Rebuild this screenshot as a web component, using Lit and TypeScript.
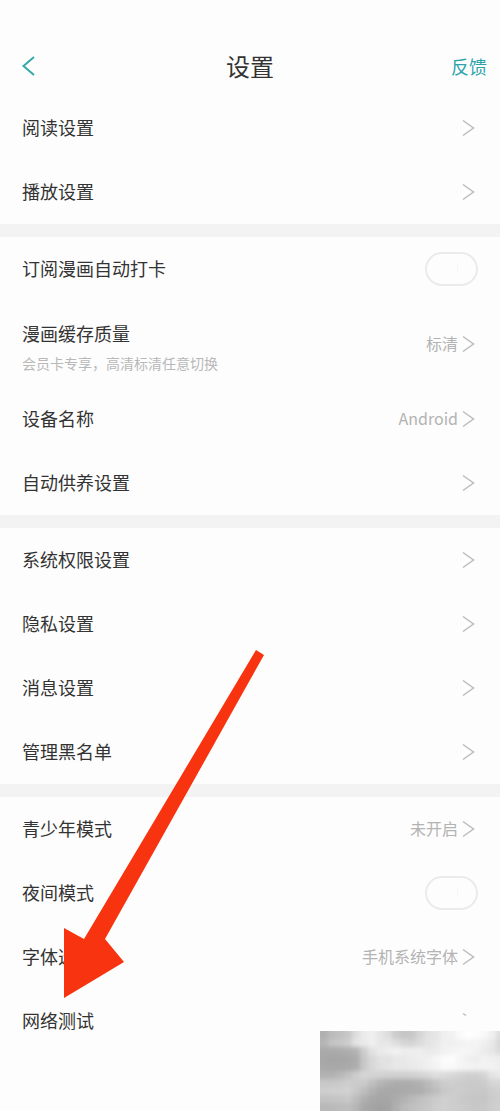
import { LitElement, html, css, svg, nothing } from "lit";
import { customElement, property } from "lit/decorators.js";

interface Item {
  label: string;
  note?: string;
  value?: string;
  toggle?: boolean;
  partial?: boolean;
}

const GROUPS: Item[][] = [
  [{ label: "阅读设置" }, { label: "播放设置" }],
  [
    { label: "订阅漫画自动打卡", toggle: true },
    { label: "漫画缓存质量", note: "会员卡专享，高清标清任意切换", value: "标清" },
    { label: "设备名称", value: "Android" },
    { label: "自动供养设置" },
  ],
  [{ label: "系统权限设置" }, { label: "隐私设置" }, { label: "消息设置" }, { label: "管理黑名单" }],
  [
    { label: "青少年模式", value: "未开启" },
    { label: "夜间模式", toggle: true },
    { label: "字体选择", value: "手机系统字体" },
    { label: "网络测试", partial: true },
  ],
];

// Grey levels of the mosaic, one row per band of 8px cells.
const MOSAIC: number[][] = [
  [176, 188, 192, 200, 222, 236, 240, 230, 222, 204, 198, 200, 214, 226, 230, 240, 242, 250, 255, 253, 248, 240, 222],
  [182, 196, 200, 206, 228, 234, 240, 232, 230, 222, 214, 212, 220, 228, 232, 240, 240, 242, 244, 244, 240, 232, 216],
  [170, 170, 172, 174, 180, 206, 226, 234, 238, 242, 238, 238, 238, 234, 236, 242, 244, 246, 246, 242, 236, 230, 220],
  [168, 166, 166, 168, 172, 200, 216, 226, 226, 232, 232, 236, 238, 240, 246, 252, 252, 246, 240, 238, 242, 240, 238],
  [170, 168, 168, 170, 174, 200, 216, 224, 228, 232, 232, 234, 236, 240, 244, 250, 250, 246, 244, 242, 242, 242, 240],
  [178, 178, 184, 192, 206, 214, 212, 210, 208, 208, 208, 210, 212, 216, 222, 220, 216, 212, 208, 208, 212, 228, 232],
  [200, 200, 202, 206, 204, 202, 192, 182, 176, 172, 172, 174, 178, 186, 196, 204, 206, 204, 202, 202, 204, 214, 214],
  [206, 208, 208, 210, 200, 190, 178, 170, 168, 168, 170, 172, 174, 182, 190, 200, 204, 204, 202, 200, 200, 206, 208],
  [194, 196, 198, 200, 190, 176, 168, 166, 166, 172, 178, 186, 192, 198, 204, 208, 206, 202, 200, 198, 198, 204, 206],
  [184, 186, 188, 190, 182, 168, 164, 162, 164, 176, 186, 192, 196, 200, 206, 208, 206, 204, 202, 200, 200, 206, 208],
];

@customElement("setting-row")
class SettingRow extends LitElement {
  @property({ attribute: false }) item!: Item;

  static styles = css`
    :host {
      display: block;
    }
    .row {
      box-sizing: border-box;
      display: flex;
      align-items: center;
      justify-content: space-between;
      width: 100%;
      min-height: 64px;
      padding: 0 22px;
      border: 0;
      background: none;
      font: inherit;
      color: #333;
      text-align: left;
    }
    .tall {
      min-height: 86px;
    }
    .text {
      display: flex;
      flex-direction: column;
      gap: 6px;
    }
    .tall .text {
      padding-top: 6px;
    }
    .label {
      padding-bottom: 2px;
      font-size: 18px;
      line-height: 24px;
    }
    .note {
      font-size: 14px;
      line-height: 20px;
      color: #b8b8b8;
    }
    .end {
      display: flex;
      align-items: center;
    }
    .value {
      padding-bottom: 2px;
      font-size: 16px;
      line-height: 24px;
      color: #b3b3b3;
    }
    .chevron {
      width: 20px;
      height: 20px;
      fill: none;
      stroke: #bcbcbc;
      stroke-width: 1.5;
    }
    .toggle {
      appearance: none;
      box-sizing: border-box;
      width: 53px;
      height: 34px;
      margin: 0;
      border: 2px solid #ebebeb;
      border-radius: 17px;
      background: linear-gradient(#f6f6f6, #f6f6f6) 30px 50% / 1px 8px no-repeat;
    }
  `;

  render() {
    const { label, note, value, toggle, partial } = this.item;
    if (toggle) {
      return html`<label class="row">
        <span class="label">${label}</span>
        <input class="toggle" type="checkbox" role="switch" />
      </label>`;
    }
    return html`<button class="row ${note ? "tall" : ""}" type="button">
      <span class="text">
        <span class="label">${label}</span>
        ${note ? html`<span class="note">${note}</span>` : nothing}
      </span>
      <span class="end">
        ${value ? html`<span class="value">${value}</span>` : nothing}
        <svg class="chevron" viewBox="0 0 20 20" aria-hidden="true">
          ${partial ? svg`<path d="M5 2.5 8 4.5" />` : svg`<path d="M5 2.5 15.5 10 5 17.5" />`}
        </svg>
      </span>
    </button>`;
  }
}

@customElement("app-root")
class AppRoot extends LitElement {
  static styles = css`
    :host {
      display: block;
      position: relative;
      box-sizing: border-box;
      min-height: 100vh;
      overflow: hidden;
      background: #fdfdfd;
      color: #333;
      font-family: "Noto Sans CJK SC", sans-serif;
    }
    .bar {
      display: grid;
      grid-template-columns: 1fr auto 1fr;
      align-items: center;
      height: 60px;
      padding: 36px 13px 0;
    }
    .back,
    .feedback {
      padding: 0;
      border: 0;
      background: none;
      font: inherit;
    }
    .back {
      justify-self: start;
      display: flex;
    }
    .back svg {
      width: 24px;
      height: 24px;
      fill: none;
      stroke: #35a9a8;
      stroke-width: 2;
    }
    .title {
      margin: 0;
      font-size: 24px;
      line-height: 32px;
      font-weight: 400;
    }
    .feedback {
      justify-self: end;
      font-size: 18px;
      line-height: 24px;
      color: #2fa3ac;
    }
    .group + .group {
      border-top: 13px solid #f3f3f3;
    }
    .arrow {
      position: absolute;
      left: 64px;
      top: 650px;
      width: 200px;
      height: 348px;
      fill: #f8330f;
      pointer-events: none;
    }
    .mosaic {
      position: absolute;
      right: 0;
      bottom: 0;
      width: 180px;
      height: 80px;
    }
    .cells {
      filter: blur(2px);
    }
  `;

  render() {
    const lastRow = MOSAIC.length - 1;
    return html`
      <header class="bar">
        <button class="back" type="button" aria-label="返回">
          <svg viewBox="0 0 24 24"><path d="M21 3 10.5 12 21 21" /></svg>
        </button>
        <h1 class="title">设置</h1>
        <button class="feedback" type="button">反馈</button>
      </header>
      <main>
        ${GROUPS.map(
          (items) => html`<section class="group">
            ${items.map((item) => html`<setting-row .item=${item}></setting-row>`)}
          </section>`
        )}
      </main>
      <svg class="arrow" viewBox="0 0 200 348" aria-hidden="true">
        <path d="M192 0 200 5 41 289 60 312 0 348 0 278 20 289Z" />
      </svg>
      <svg class="mosaic" viewBox="0 0 180 80" aria-hidden="true" shape-rendering="crispEdges">
        <g class="cells">
          ${MOSAIC.map((row, y) =>
            row.map((v, x) => {
              const left = x === 0 ? -8 : x * 8;
              const top = y === 0 ? -8 : y * 8;
              const right = x * 8 + (x === row.length - 1 ? 16 : 8);
              const bottom = y * 8 + (y === lastRow ? 16 : 8);
              return svg`<rect x=${left} y=${top} width=${right - left} height=${bottom - top} fill="rgb(${v},${v},${v})" />`;
            })
          )}
        </g>
      </svg>
    `;
  }
}
